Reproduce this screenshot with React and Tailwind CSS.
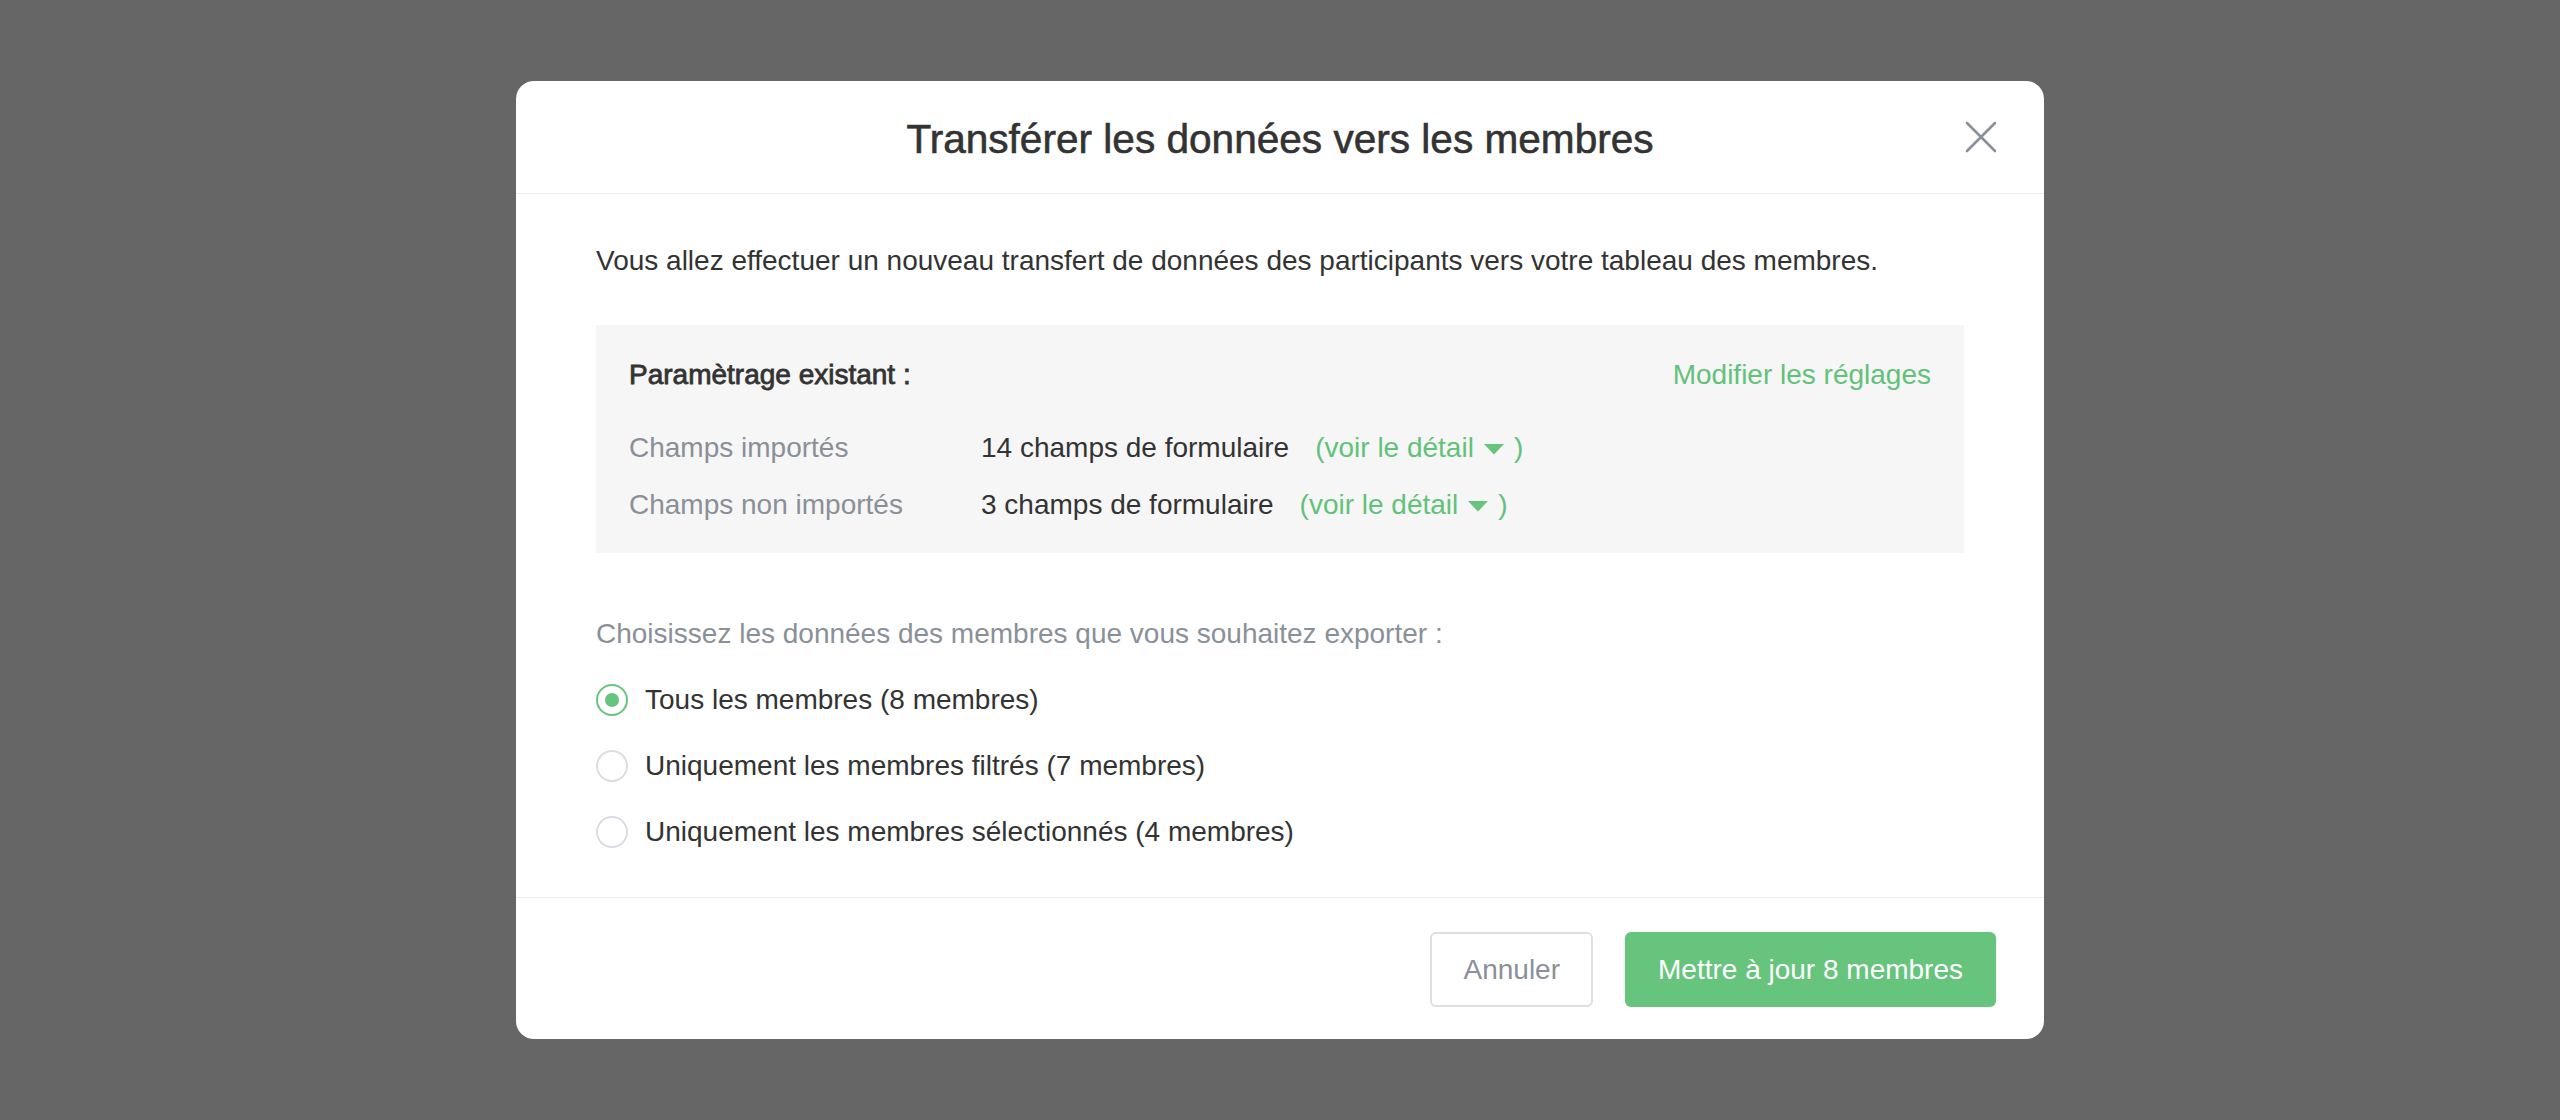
import React, { useState } from 'react'

const rows = [
  { label: 'Champs importés', value: '14 champs de formulaire' },
  { label: 'Champs non importés', value: '3 champs de formulaire' },
]

const options = [
  { id: 'all', label: 'Tous les membres (8 membres)' },
  { id: 'filtered', label: 'Uniquement les membres filtrés (7 membres)' },
  { id: 'selected', label: 'Uniquement les membres sélectionnés (4 membres)' },
]

const Radio = ({ checked }) => (
  <span
    className={
      'flex h-[32px] w-[32px] shrink-0 items-center justify-center rounded-full border-2 bg-white ' +
      (checked ? 'border-[#66c47c]' : 'border-[#d9dde3]')
    }
  >
    {checked && <span className="h-[14px] w-[14px] rounded-full bg-[#66c47c]" />}
  </span>
)

const Caret = () => (
  <svg width="20" height="11" viewBox="0 0 20 11" className="mx-[10px] mt-[3px] inline-block">
    <path d="M0 0 L20 0 L10 10.5 Z" fill="#66c47c" />
  </svg>
)

const App = () => {
  const [choice, setChoice] = useState('all')

  return (
    <div className="flex h-[1120px] w-full items-center justify-center bg-[#666666] font-['Liberation_Sans',Arial,sans-serif] text-[#333333]">
      <div className="w-[1528px] overflow-hidden rounded-[18px] bg-white">
        <div className="relative flex h-[113px] items-center justify-center border-b border-[#e9ecf0] pt-[4px]">
          <h1 className="text-[40.6px] leading-[48px] [-webkit-text-stroke:0.6px_#333333]">
            Transférer les données vers les membres
          </h1>
          <button className="absolute right-[47px] top-[40px] h-[32px] w-[32px]">
            <svg viewBox="0 0 32 32" width="32" height="32">
              <path d="M2 2 L30 30 M30 2 L2 30" stroke="#8a9099" strokeWidth="2.6" strokeLinecap="round" />
            </svg>
          </button>
        </div>

        <div className="px-[80px] pt-[47px] pb-[47px]">
          <p className="text-[28px] leading-[40px]">
            Vous allez effectuer un nouveau transfert de données des participants vers votre tableau des membres.
          </p>

          <div className="mt-[44px] bg-[#f6f6f6] px-[33px] pt-[32px] pb-[30px]">
            <div className="flex items-center justify-between text-[28px] leading-[36px]">
              <span className="[-webkit-text-stroke:0.8px_#333333]">Paramètrage existant :</span>
              <button className="text-[#62c27a]">Modifier les réglages</button>
            </div>
            <div className="mt-[37px] flex flex-col gap-[21px]">
              {rows.map((row) => (
                <div key={row.label} className="flex items-center text-[28px] leading-[36px]">
                  <span className="w-[352px] text-[#8a9099]">{row.label}</span>
                  <span>{row.value}</span>
                  <button className="ml-[26px] flex items-center text-[#62c27a]">
                    (voir le détail
                    <Caret />
                    )
                  </button>
                </div>
              ))}
            </div>
          </div>

          <p className="mt-[63px] text-[28px] leading-[36px] text-[#8a9099]">
            Choisissez les données des membres que vous souhaitez exporter :
          </p>

          <div className="mt-[30px] flex flex-col gap-[30px]">
            {options.map((opt) => (
              <label
                key={opt.id}
                className="flex cursor-pointer items-center gap-[17px] text-[28px] leading-[36px]"
                onClick={() => setChoice(opt.id)}
              >
                <Radio checked={choice === opt.id} />
                <span>{opt.label}</span>
              </label>
            ))}
          </div>
        </div>

        <div className="flex justify-end gap-[32px] border-t border-[#e9ecf0] pt-[34px] pr-[48px] pb-[32px]">
          <button className="h-[75px] rounded-[6px] border-2 border-[#dcdfe4] px-[31px] text-[28px] text-[#8a9099]">
            Annuler
          </button>
          <button className="h-[75px] rounded-[6px] bg-[#66c47c] px-[33px] text-[28px] text-white">
            Mettre à jour 8 membres
          </button>
        </div>
      </div>
    </div>
  )
}

export default App
